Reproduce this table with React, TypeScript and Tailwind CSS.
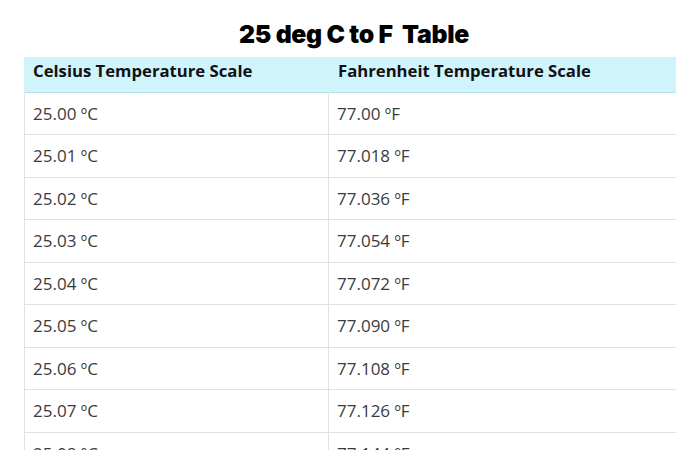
const rows = [
  ["25.00", "77.00"],
  ["25.01", "77.018"],
  ["25.02", "77.036"],
  ["25.03", "77.054"],
  ["25.04", "77.072"],
  ["25.05", "77.090"],
  ["25.06", "77.108"],
  ["25.07", "77.126"],
  ["25.08", "77.144"],
  ["25.09", "77.162"],
];

export default function App() {
  return (
    <div className="w-[700px] h-[450px] overflow-hidden bg-white font-['Open_Sans',sans-serif]">
      <h2 className="pt-[18px] pl-[8px] h-[57px] text-center text-[24.8px] leading-[32px] font-black text-black font-['Inter',sans-serif] tracking-[-0.3px] whitespace-pre">
        25 deg C to F  Table
      </h2>
      <table className="ml-[24px] w-[652px] border-collapse table-fixed">
        <thead>
          <tr className="h-[35px] bg-[#cff4fc] border-b border-[#b6dfe6]">
            <th className="w-[304px] text-left pl-[8px] pb-[6px] leading-[22px] text-[16.7px] font-bold text-[#111] border-l border-[#d9eef2]">
              Celsius Temperature Scale
            </th>
            <th className="text-left pl-[9px] pb-[6px] leading-[22px] text-[16.7px] font-bold text-[#111] border-l border-[#d9eef2]">
              Fahrenheit Temperature Scale
            </th>
          </tr>
        </thead>
        <tbody>
          {rows.map(([c, f]) => (
            <tr key={c} className="h-[42.5px] border-b border-[#dee2e6]">
              <td className="pl-[8px] text-[17px] text-[#3b3b3b] border-l border-[#dee2e6]">
                {c} ºC
              </td>
              <td className="pl-[8px] text-[17px] text-[#3b3b3b] border-l border-[#dee2e6]">
                {f} ºF
              </td>
            </tr>
          ))}
        </tbody>
      </table>
    </div>
  );
}
